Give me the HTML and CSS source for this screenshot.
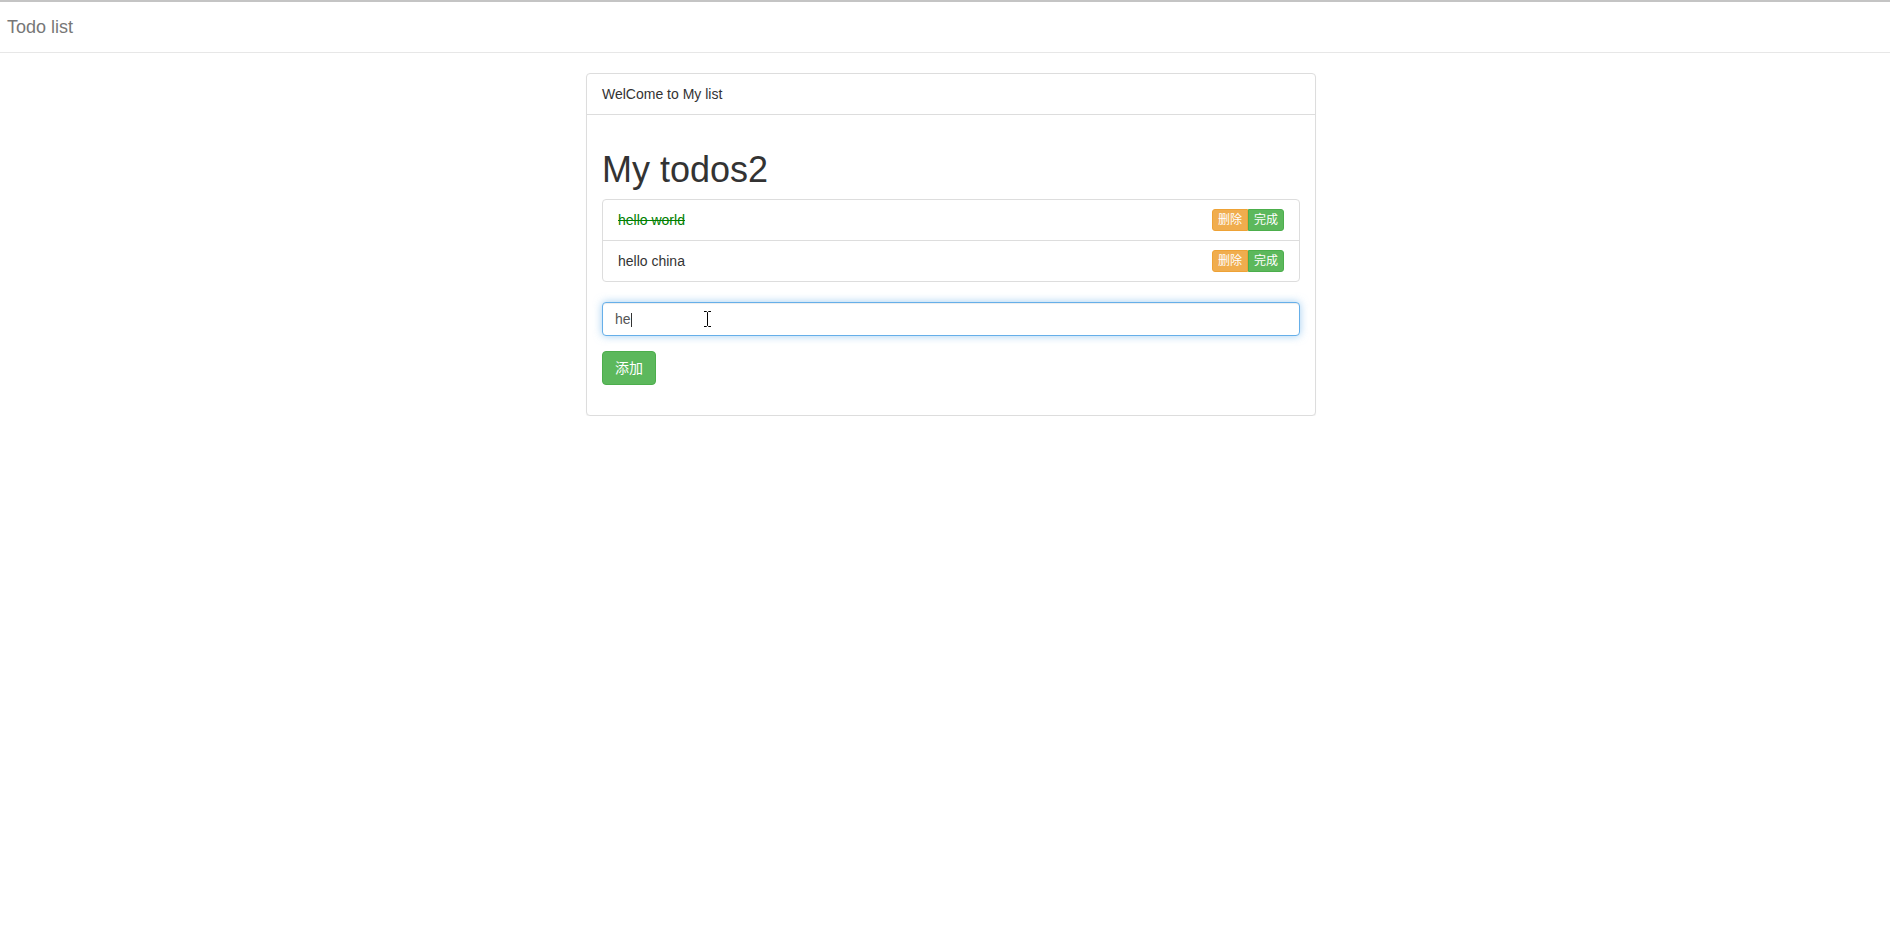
FILE: index.html
```html
<!DOCTYPE html>
<html lang="zh">
<head>
<meta charset="utf-8">
<title>Todo list</title>
<link rel="stylesheet" href="styles.css">
</head>
<body>
<nav class="navbar">
  <a class="navbar-brand" href="#">Todo list</a>
</nav>
<div class="page">
  <div class="panel">
    <div class="panel-heading">WelCome to My list</div>
    <div class="panel-body">
      <h1 class="title">My todos2</h1>
      <ul class="list-group">
        <li class="list-group-item">
          <span class="todo-text done">hello world</span>
          <span class="btn-group">
            <button class="btn btn-xs btn-warning">删除</button><button class="btn btn-xs btn-success">完成</button>
          </span>
        </li>
        <li class="list-group-item">
          <span class="todo-text">hello china</span>
          <span class="btn-group">
            <button class="btn btn-xs btn-warning">删除</button><button class="btn btn-xs btn-success">完成</button>
          </span>
        </li>
      </ul>
      <div class="form-group input-wrap">
        <input class="form-control focused" type="text" value="he">
        <span class="caret-line"></span>
        <svg class="mouse-ibeam" width="9" height="18" viewBox="0 0 9 18">
          <path d="M1 1.5h2.5l1 1 1-1H8M4.5 2.5v13M1 16.5h2.5l1-1 1 1H8" fill="none" stroke="#fff" stroke-width="3"/>
          <path d="M1 1.5h2.5l1 1 1-1H8M4.5 2.5v13M1 16.5h2.5l1-1 1 1H8" fill="none" stroke="#000" stroke-width="1"/>
        </svg>
      </div>
      <div class="form-group">
        <button class="btn btn-success btn-add">添加</button>
      </div>
    </div>
  </div>
</div>
</body>
</html>
```
FILE: styles.css
```css
* { box-sizing: border-box; }
html, body { margin: 0; padding: 0; background: #fff; }
body {
  font-family: "Liberation Sans", Arial, "Noto Sans CJK SC", sans-serif;
  font-size: 14px;
  line-height: 20px;
  color: #333;
}
.navbar {
  border-top: 2px solid #c4c4c4;
  border-bottom: 1px solid #e7e7e7;
  height: 53px;
  background: #fff;
  margin-bottom: 20px;
}
.navbar-brand {
  display: block;
  padding: 15px 7px;
  font-size: 18px;
  line-height: 20px;
  color: #777;
  text-decoration: none;
}
.page {
  display: flex;
  justify-content: center;
  padding-left: 12px;
}
.panel {
  width: 730px;
  border: 1px solid #ddd;
  border-radius: 4px;
  background: #fff;
  box-shadow: 0 1px 1px rgba(0,0,0,.05);
}
.panel-heading {
  padding: 10px 15px;
  border-bottom: 1px solid #ddd;
  line-height: 20px;
}
.panel-body {
  padding: 15px;
}
.title {
  margin: 20px 0 10px;
  font-size: 36px;
  font-weight: 500;
  line-height: 39px;
  color: #333;
}
.list-group {
  list-style: none;
  margin: 0 0 20px;
  padding: 0;
  border: 1px solid #ddd;
  border-radius: 4px;
}
.list-group-item {
  display: flex;
  justify-content: space-between;
  align-items: flex-start;
  padding: 10px 15px;
  height: 40px;
  line-height: 20px;
}
.list-group-item + .list-group-item {
  border-top: 1px solid #ddd;
  height: 41px;
}
.todo-text.done {
  color: green;
  text-decoration: line-through;
}
.btn-group {
  display: flex;
  height: 20px;
  margin-top: -1px;
}
.btn {
  font-family: "Liberation Sans", Arial, "Noto Sans CJK SC", sans-serif;
  border: 1px solid transparent;
  color: #fff;
  cursor: pointer;
  padding: 6px 12px;
  font-size: 14px;
  line-height: 20px;
  height: 34px;
  border-radius: 4px;
}
.btn-xs {
  padding: 1px 5px;
  font-size: 12px;
  line-height: 18px;
  height: 22px;
  border-radius: 3px;
}
.btn-group .btn:first-child {
  border-top-right-radius: 0;
  border-bottom-right-radius: 0;
}
.btn-group .btn:last-child {
  border-top-left-radius: 0;
  border-bottom-left-radius: 0;
}
.btn-warning { background: #f0ad4e; border-color: #eea236; }
.btn-success { background: #5cb85c; border-color: #4cae4c; }
.form-group { margin-bottom: 15px; }
.input-wrap { position: relative; }
.form-control {
  display: block;
  width: 100%;
  height: 34px;
  padding: 6px 12px;
  font-family: "Liberation Sans", Arial, sans-serif;
  font-size: 14px;
  line-height: 20px;
  color: #555;
  background: #fff;
  border: 1px solid #ccc;
  border-radius: 4px;
  outline: none;
}
.form-control.focused {
  border-color: #66afe9;
  box-shadow: inset 0 1px 1px rgba(0,0,0,.075), 0 0 8px rgba(102,175,233,.6);
}
.caret-line {
  position: absolute;
  left: 29px;
  top: 11px;
  width: 1px;
  height: 14px;
  background: #333;
}
.mouse-ibeam {
  position: absolute;
  left: 101px;
  top: 8px;
}
.btn-add {
  display: inline-block;
}
```
